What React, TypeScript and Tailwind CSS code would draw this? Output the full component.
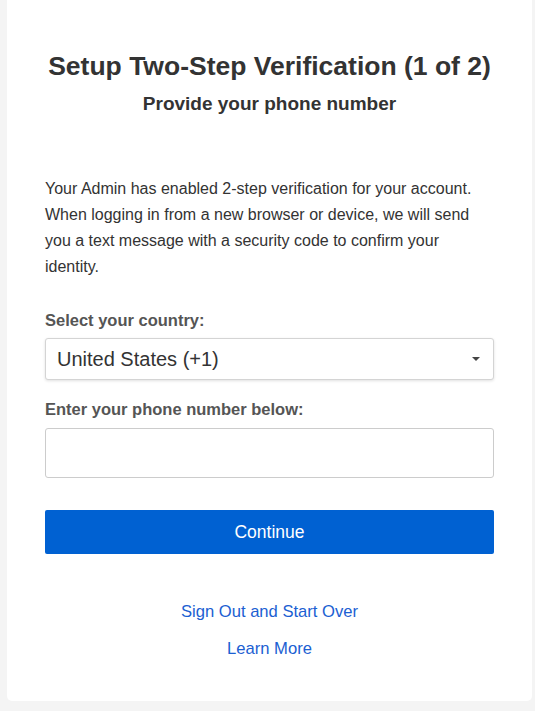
export default function App() {
  return (
    <div className="min-h-screen bg-[#f4f4f4] pl-[7px] pr-[3px] pb-[13px] font-['Liberation_Sans',Arial,sans-serif]">
      <div className="rounded-b-[5px] bg-white px-[38px] pt-[50px] pb-[41px] text-[#333]">
        <h1 className="text-center text-[26.5px] font-bold leading-[33px] text-[#333]">
          Setup Two-Step Verification (1 of 2)
        </h1>
        <h2 className="mt-[9px] text-center text-[19px] font-bold leading-[24px] text-[#333]">
          Provide your phone number
        </h2>

        <p className="mt-[60px] text-[16px] leading-[26px] text-[#333]">
          Your Admin has enabled 2-step verification for your account. When logging in from a new browser or device, we will send you a text message with a security code to confirm your identity.
        </p>

        <label className="mt-[30px] block text-[16.5px] font-bold leading-[20px] text-[#555]">
          Select your country:
        </label>
        <div className="mt-[8px] flex h-[42px] items-center justify-between rounded-[3px] border border-[#d4d4d4] bg-white pl-[11px] pr-[13px] shadow-[0_1px_3px_rgba(0,0,0,0.12)]">
          <span className="text-[20px] text-[#333]">United States (+1)</span>
          <span className="h-0 w-0 border-x-[4px] border-t-[4px] border-x-transparent border-t-[#444]" />
        </div>

        <label className="mt-[19px] block text-[16.5px] font-bold leading-[20px] text-[#555]">
          Enter your phone number below:
        </label>
        <input
          type="tel"
          className="mt-[9px] block h-[50px] w-full rounded-[3px] border border-[#ccc] bg-white px-3 text-[18px] outline-none"
        />

        <button className="mt-[32px] h-[44px] w-full rounded-[2px] bg-[#0061d2] text-[17.5px] text-white">
          Continue
        </button>

        <div className="mt-[47px] flex flex-col items-center gap-[15px] text-[16.6px] leading-[22px] text-[#1b60d2]">
          <a href="#">Sign Out and Start Over</a>
          <a href="#">Learn More</a>
        </div>
      </div>
    </div>
  );
}
